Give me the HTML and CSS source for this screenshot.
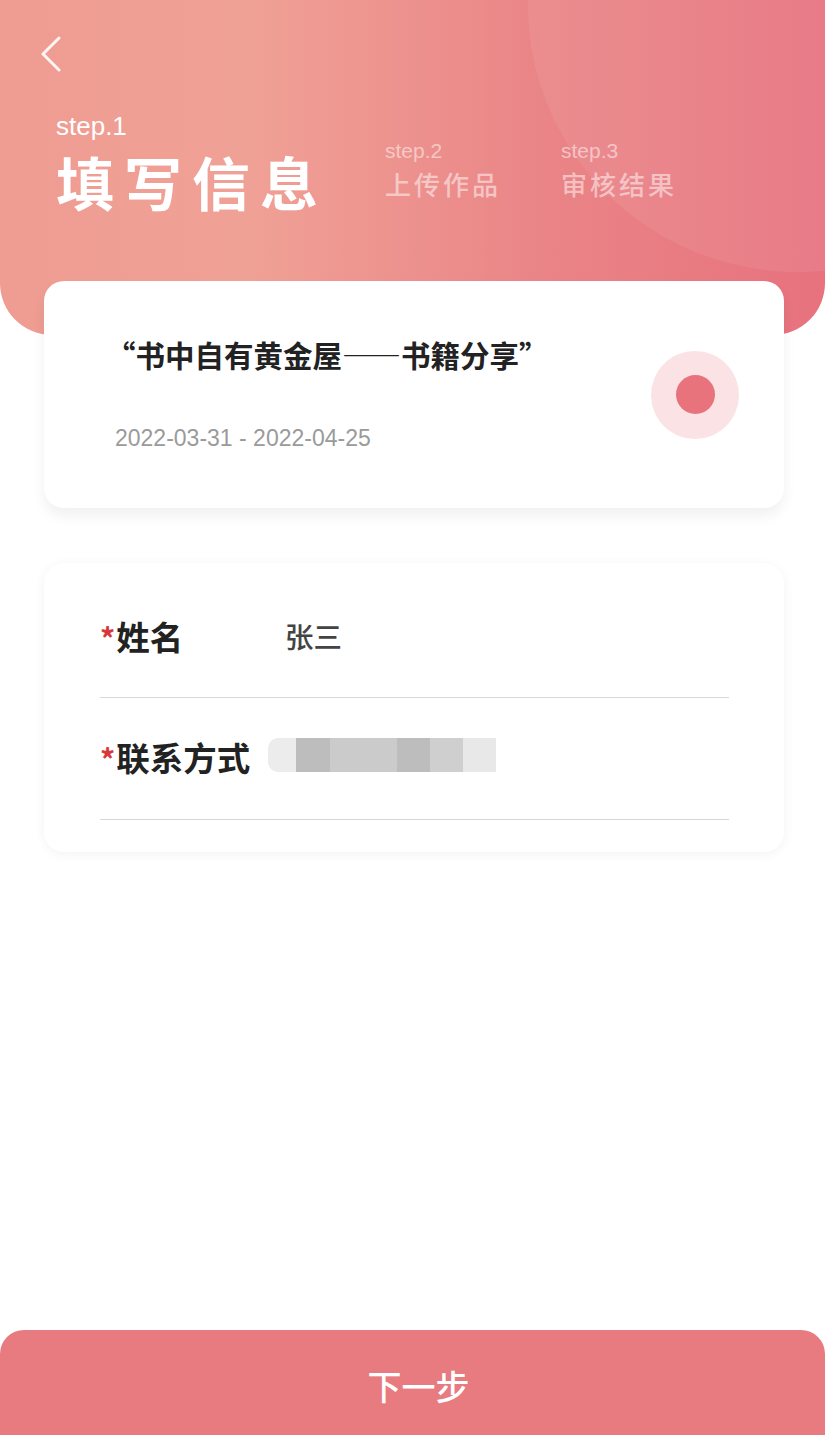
FILE: index.html
```html
<!DOCTYPE html>
<html lang="zh">
<head>
<meta charset="utf-8">
<link rel="stylesheet" href="styles.css">
</head>
<body>
<div class="page">
  <header class="hero">
    <div class="hero-circle"></div>
    <div class="back">
      <svg width="26" height="36" viewBox="0 0 26 36"><path d="M21 2 L5 18 L21 34" fill="none" stroke="#fff" stroke-opacity="0.9" stroke-width="3" stroke-linecap="round" stroke-linejoin="round"/></svg>
    </div>
    <div class="steps">
      <div class="step active">
        <div class="step-no">step.1</div>
        <div class="step-name">填写信息</div>
      </div>
      <div class="step s2">
        <div class="step-no">step.2</div>
        <div class="step-name">上传作品</div>
      </div>
      <div class="step s3">
        <div class="step-no">step.3</div>
        <div class="step-name">审核结果</div>
      </div>
    </div>
  </header>

  <section class="card event">
    <div class="event-text">
      <div class="event-title">“书中自有黄金屋——书籍分享”</div>
      <div class="event-date">2022-03-31 - 2022-04-25</div>
    </div>
    <div class="dot"><span></span></div>
  </section>

  <section class="card form">
    <div class="row">
      <div class="label"><span class="req">*</span>姓名</div>
      <div class="value">张三</div>
    </div>
    <div class="row">
      <div class="label"><span class="req">*</span>联系方式</div>
      <div class="blur">
        <span class="b1"></span><span class="b2"></span><span class="b3"></span><span class="b4"></span><span class="b5"></span><span class="b6"></span>
      </div>
    </div>
  </section>

  <footer class="next">下一步</footer>
</div>
</body>
</html>
```

FILE: styles.css
```css
* { box-sizing: border-box; }
html, body { margin: 0; padding: 0; background: #fff; }
body {
  font-family: "Noto Sans CJK SC", "Noto Sans", sans-serif;
}
.page {
  width: 825px;
  height: 1435px;
  display: flex;
  flex-direction: column;
  overflow: hidden;
  position: relative;
}
.hero {
  position: relative;
  height: 335px;
  flex: none;
  background: linear-gradient(90deg, #ef9c92 0%, #f0a196 30%, #ea8587 65%, #e7727e 100%);
  border-radius: 0 0 52px 52px;
  overflow: hidden;
  padding: 36px 0 0 38px;
}
.hero-circle {
  position: absolute;
  left: 528px;
  top: -262px;
  width: 540px;
  height: 534px;
  border-radius: 50%;
  background: rgba(255, 255, 255, 0.07);
}
.back {
  position: relative;
  width: 26px;
  height: 36px;
}
.steps {
  position: relative;
  display: flex;
  align-items: flex-end;
  margin-top: 39px;
  padding-left: 18px;
}
.step-no {
  color: #fff;
  font-family: "Liberation Sans", "Noto Sans", sans-serif;
}
.step.active .step-no {
  font-size: 26px;
  line-height: 30px;
}
.step.active .step-name {
  color: #fff;
  font-size: 58px;
  font-weight: 700;
  line-height: 70px;
  letter-spacing: 10px;
  margin-top: 5px;
}
.step.s2, .step.s3 {
  color: rgba(255, 255, 255, 0.5);
  padding-bottom: 15px;
}
.step.s2 { margin-left: 57px; }
.step.s3 { margin-left: 60px; }
.step.s2 .step-no, .step.s3 .step-no {
  color: rgba(255, 255, 255, 0.5);
  font-size: 21px;
  line-height: 22px;
}
.step.s2 .step-name, .step.s3 .step-name {
  font-size: 26px;
  line-height: 34px;
  letter-spacing: 3px;
  margin-top: 5px;
  font-weight: 500;
}
.card {
  background: #fff;
  margin: 0 41px 0 44px;
  border-radius: 20px;
  flex: none;
}
.event {
  position: relative;
  margin-top: -54px;
  height: 227px;
  box-shadow: 0 8px 14px rgba(0, 0, 0, 0.06);
  display: flex;
  align-items: center;
  justify-content: space-between;
  padding: 0 45px 0 71px;
}
.event-title {
  font-size: 29.5px;
  font-weight: 700;
  color: #222;
  line-height: 40px;
  margin-left: -9px;
  margin-top: -4px;
}
.event-date {
  margin-top: 50px;
  font-family: "Liberation Sans", "Noto Sans", sans-serif;
  font-size: 23px;
  color: #9a9a9a;
  line-height: 28px;
}
.dot {
  width: 88px;
  height: 88px;
  border-radius: 50%;
  background: #fbe3e5;
  display: flex;
  align-items: center;
  justify-content: center;
}
.dot span {
  width: 39px;
  height: 39px;
  border-radius: 50%;
  background: #e8737c;
}
.form {
  margin-top: 55px;
  height: 289px;
  box-shadow: 0 2px 12px rgba(0, 0, 0, 0.05);
  padding: 14px 55px 0 56px;
}
.row {
  height: 122px;
  border-bottom: 1px solid #d8d8d8;
  display: flex;
  align-items: center;
  padding-bottom: 2px;
}
.row:first-child { height: 121px; }
.label {
  font-size: 33.5px;
  font-weight: 700;
  color: #222;
  width: 185px;
  line-height: 44px;
}
.row:nth-child(2) .label { width: 168px; }
.req {
  color: #d8383c;
  font-weight: 700;
  font-size: 30px;
  margin-right: 1px;
}
.value {
  font-size: 28.5px;
  color: #444;
  font-weight: 500;
  line-height: 40px;
}
.blur {
  display: flex;
  height: 34px;
  margin-top: -6px;
}
.blur span { height: 34px; display: block; }
.blur .b1 { width: 28px; background: #ececec; border-radius: 10px 0 0 10px; }
.blur .b2 { width: 34px; background: #bdbdbd; }
.blur .b3 { width: 47px; background: #cbcbcb; }
.blur .b4 { width: 20px; background: #cbcbcb; }
.blur .b5 { width: 33px; background: #bdbdbd; }
.blur .b6 { width: 33px; background: #cfcfcf; }
.blur::after { content: ""; width: 33px; height: 34px; background: #e8e8e8; }
.next {
  margin-top: auto;
  height: 105px;
  flex: none;
  background: #e87b80;
  border-radius: 24px 24px 0 0;
  color: #fff;
  font-size: 34px;
  font-weight: 500;
  display: flex;
  align-items: center;
  justify-content: center;
  padding-top: 6px;
  padding-left: 12px;
}
```
